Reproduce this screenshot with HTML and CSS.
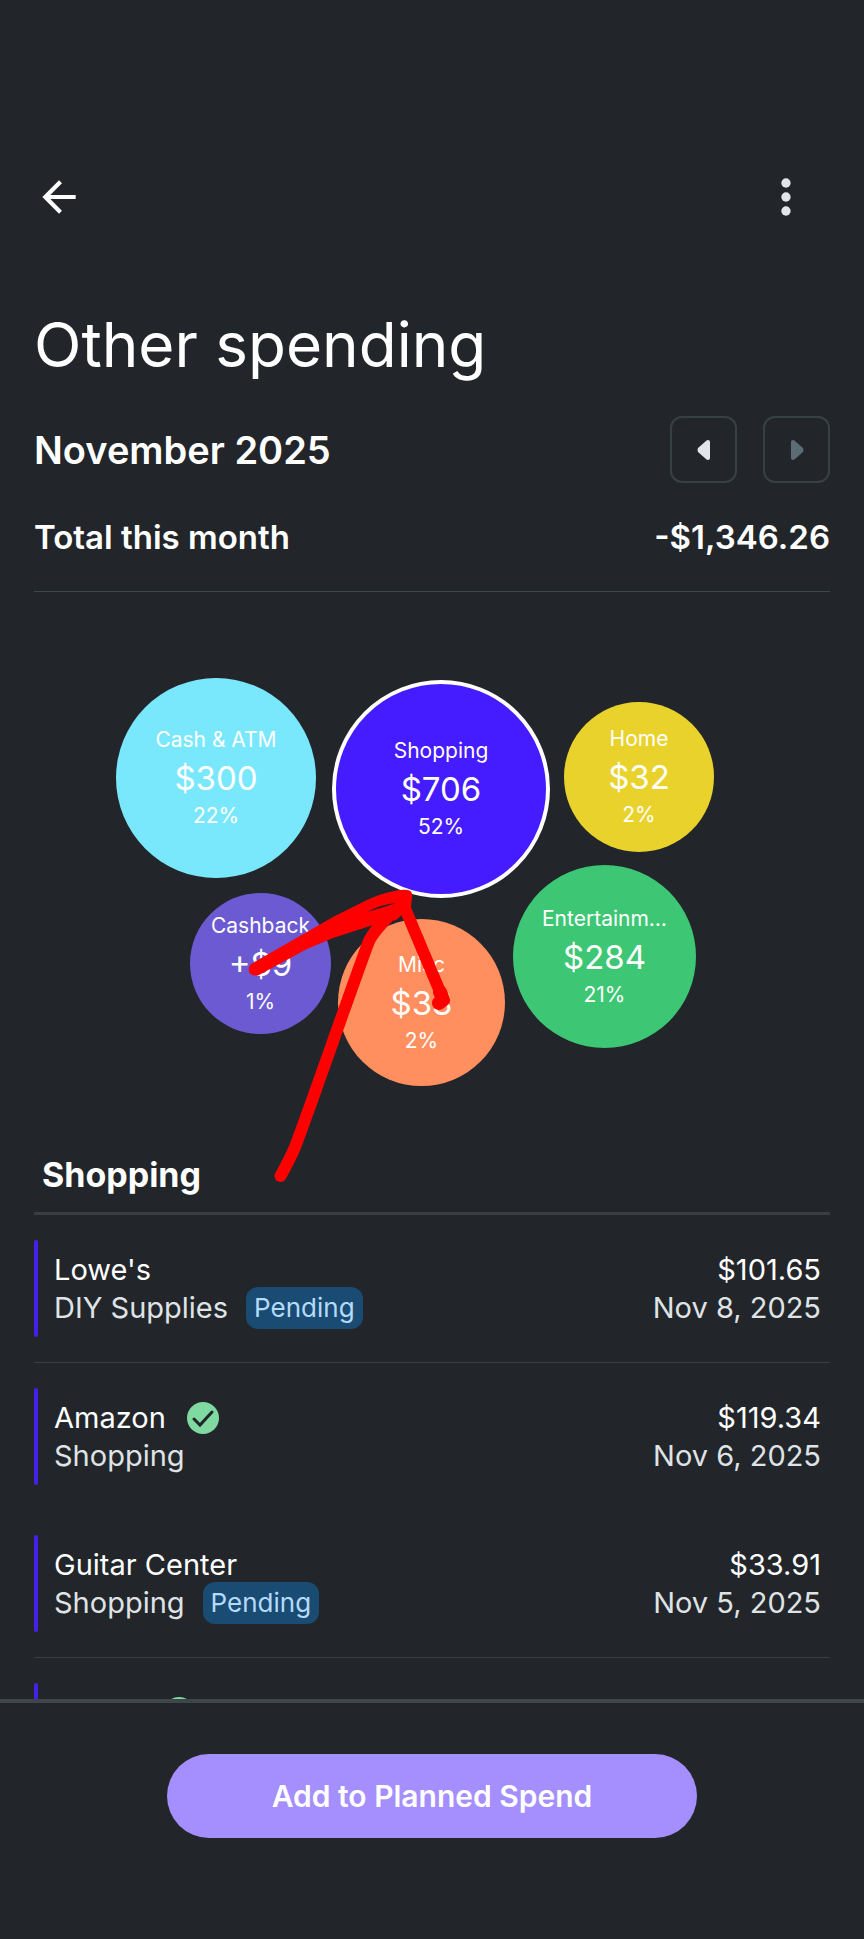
FILE: index.html
```
<!DOCTYPE html>
<html lang="en">
<head>
    <meta charset="UTF-8">
    <meta name="viewport" content="width=device-width, initial-scale=1.0">
    <title>Other spending</title>
    <link rel="stylesheet" href="styles.css">
</head>
<body>

    <main class="content">
        <!-- Top Bar -->
        <header class="top-bar">
            <button type="button" class="icon-button" aria-label="Back">
                <svg width="50" height="50" viewBox="0 0 24 24"><path fill="#fff" d="M20 11H7.83l5.59-5.59L12 4l-8 8 8 8 1.41-1.41L7.83 13H20v-2z"/></svg>
            </button>
            <button type="button" class="icon-button" aria-label="More options">
                <svg width="56" height="56" viewBox="0 0 24 24" fill="#e3e6e8"><circle cx="12" cy="6" r="2"/><circle cx="12" cy="12" r="2"/><circle cx="12" cy="18" r="2"/></svg>
            </button>
        </header>

        <h1>Other spending</h1>

        <!-- Month Picker -->
        <div class="month-row">
            <h2>November 2025</h2>
            <div class="month-nav">
                <button type="button" aria-label="Previous month">
                    <svg width="14" height="20" viewBox="0 0 14 20"><path fill="#e3e6e8" d="M13 2v16q0 2-2 2-1 0-2-1L1 12q-1-2 0-4L9 1q1-1 2-1 2 0 2 2z"/></svg>
                </button>
                <button type="button" aria-label="Next month" disabled>
                    <svg width="14" height="20" viewBox="0 0 14 20"><path fill="#5b6c74" d="M1 2v16q0 2 2 2 1 0 2-1l8-7q1-2 0-4L5 1Q4 0 3 0 1 0 1 2z"/></svg>
                </button>
            </div>
        </div>

        <div class="total-row">
            <span>Total this month</span>
            <span>-$1,346.26</span>
        </div>

        <!-- Category Bubbles -->
        <div class="bubbles">
            <button type="button" class="bubble cash">
                <span class="label">Cash &amp; ATM</span>
                <span class="amount">$300</span>
                <span class="percent">22%</span>
            </button>
            <button type="button" class="bubble shopping">
                <span class="label">Shopping</span>
                <span class="amount">$706</span>
                <span class="percent">52%</span>
            </button>
            <button type="button" class="bubble home">
                <span class="label">Home</span>
                <span class="amount">$32</span>
                <span class="percent">2%</span>
            </button>
            <button type="button" class="bubble cashback">
                <span class="label">Cashback</span>
                <span class="amount">+$9</span>
                <span class="percent">1%</span>
            </button>
            <button type="button" class="bubble misc">
                <span class="label">Misc</span>
                <span class="amount">$33</span>
                <span class="percent">2%</span>
            </button>
            <button type="button" class="bubble entertainment">
                <span class="label">Entertainm…</span>
                <span class="amount">$284</span>
                <span class="percent">21%</span>
            </button>

            <!-- Hand-drawn arrow -->
            <svg class="arrow" width="210" height="310" viewBox="128 208 210 310" aria-hidden="true">
                <g fill="none" stroke="#ff0000" stroke-width="12" stroke-linecap="round" stroke-linejoin="round">
                    <path d="M164.500 498C170 488 175 479 179 469C189 444 240 297 253 263C258 253 266 245 276 235L289 225"/>
                    <path d="M288 228L325 316"/>
                    <path stroke-width="14" d="M324 314L327 322L323 325"/>
                </g>
                <path fill="#ff0000" fill-rule="evenodd" d="M135 286L177 262L217 239L251 222Q264 216 274 214Q284 211 292 212Q297 213 296 219L295 229Q291 233 280 242L254 248L217 260L191 271L143 297Q136 299 133 294Q132 289 135 286zM251 234Q265 230 281 225Q265 226 251 234z"/>
            </svg>
        </div>

        <!-- Transactions -->
        <h3>Shopping</h3>
        <ul class="transactions">
            <li>
                <div class="details">
                    <div class="name">Lowe's</div>
                    <div class="category">DIY Supplies <span class="pending">Pending</span></div>
                </div>
                <div class="figures">
                    <div class="price">$101.65</div>
                    <div class="date">Nov 8, 2025</div>
                </div>
            </li>
            <li class="no-divider">
                <div class="details">
                    <div class="name">Amazon <svg class="check" width="32" height="32" viewBox="0 0 32 32"><circle cx="16" cy="16" r="16" fill="#7fd9a0"/><path d="M7 17l6 6L25 10" fill="none" stroke="#22262a" stroke-width="3" stroke-linecap="round"/></svg></div>
                    <div class="category">Shopping</div>
                </div>
                <div class="figures">
                    <div class="price">$119.34</div>
                    <div class="date">Nov 6, 2025</div>
                </div>
            </li>
            <li>
                <div class="details">
                    <div class="name">Guitar Center</div>
                    <div class="category">Shopping <span class="pending">Pending</span></div>
                </div>
                <div class="figures">
                    <div class="price">$33.91</div>
                    <div class="date">Nov 5, 2025</div>
                </div>
            </li>
            <li>
                <div class="details">
                    <div class="name">Target <svg class="check" width="32" height="32" viewBox="0 0 32 32"><circle cx="16" cy="16" r="16" fill="#7fd9a0"/><path d="M7 17l6 6L25 10" fill="none" stroke="#22262a" stroke-width="3" stroke-linecap="round"/></svg></div>
                </div>
                <div class="figures">
                    <div class="price">$21.14</div>
                </div>
            </li>
        </ul>
    </main>

    <footer>
        <button type="button" class="add-button">Add to Planned Spend</button>
    </footer>

</body>
</html>
```
FILE: styles.css
```
* {
    box-sizing: border-box;
}

body {
    margin: 0;
    height: 100vh;
    display: flex;
    flex-direction: column;
    background-color: #22262a;
    color: #fff;
    font-family: Inter, Roboto, sans-serif;
}

button {
    padding: 0;
    border: none;
    background: none;
    color: inherit;
    font-family: inherit;
    cursor: pointer;
}

svg {
    display: block;
}

h1, h2, h3 {
    margin: 0;
}

.content {
    flex: 1;
    min-height: 0;
    padding: 169px 34px 0;
    overflow-y: auto;
    scrollbar-width: none;
}

.top-bar {
    display: flex;
    justify-content: space-between;
    align-items: center;
    padding-right: 16px;
    margin-bottom: 80px;
}

h1 {
    font-size: 62px;
    font-weight: 400;
    line-height: 80px;
}

.month-row {
    display: flex;
    justify-content: space-between;
    align-items: center;
    margin-top: 31px;
}

h2 {
    font-size: 38px;
    font-weight: 600;
}

.month-nav {
    display: flex;
    gap: 26px;
}

.month-nav button {
    display: flex;
    justify-content: center;
    align-items: center;
    width: 67px;
    height: 67px;
    border: 2px solid #394043;
    border-radius: 12px;
}

.total-row {
    display: flex;
    justify-content: space-between;
    margin-top: 34px;
    padding-bottom: 34px;
    border-bottom: 1px solid #3f4649;
    font-size: 33px;
    font-weight: 600;
    line-height: 40px;
}

/* Bubbles */
.bubbles {
    position: relative;
    width: 632px;
    height: 408px;
    margin: 86px auto 69px;
}

.bubble {
    position: absolute;
    display: flex;
    flex-direction: column;
    justify-content: center;
    align-items: center;
    border-radius: 50%;
    font-size: 21px;
    line-height: 32px;
    white-space: nowrap;
}

.bubble .amount {
    font-size: 33px;
    line-height: 44px;
}

.cash {
    left: 0;
    top: 0;
    width: 200px;
    height: 200px;
    background-color: #7ae8fc;
}

.shopping {
    left: 216px;
    top: 2px;
    width: 218px;
    height: 218px;
    border: 4px solid #fff;
    background-color: #451cff;
}

.home {
    left: 448px;
    top: 24px;
    width: 150px;
    height: 150px;
    background-color: #e9d22c;
}

.cashback {
    left: 74px;
    top: 215px;
    width: 141px;
    height: 141px;
    background-color: #6c5ad2;
}

.misc {
    left: 222px;
    top: 241px;
    width: 167px;
    height: 167px;
    background-color: #ff8f5e;
}

.entertainment {
    left: 397px;
    top: 187px;
    width: 183px;
    height: 183px;
    background-color: #3dc674;
}

.arrow {
    position: absolute;
    left: 128px;
    top: 208px;
    pointer-events: none;
}

/* Transactions */
h3 {
    padding: 0 8px 17px;
    border-bottom: 3px solid #3a3e43;
    font-size: 34px;
    font-weight: 700;
    line-height: 40px;
}

.transactions {
    margin: 0;
    padding: 0;
    list-style: none;
    font-size: 29px;
    line-height: 38px;
}

.transactions li {
    display: flex;
    padding: 25px 0;
    border-bottom: 1px solid #3a3f43;
}

.transactions li.no-divider {
    border-bottom: none;
}

.transactions li::before {
    content: "";
    width: 4px;
    height: 97px;
    border-radius: 2px;
    background-color: #4520ea;
}

.details, .figures {
    display: flex;
    flex-direction: column;
    padding-top: 11px;
}

.details {
    flex: 1;
    padding-left: 16px;
}

.figures {
    padding-right: 9px;
    text-align: right;
}

.name, .category {
    display: flex;
    align-items: center;
    height: 38px;
}

.category, .date {
    color: #dfe3e6;
}

.check {
    margin-left: 21px;
}

.pending {
    margin-left: 18px;
    padding: 0 8px;
    border-radius: 12px;
    background-color: #1a4b73;
    color: #b5dbfb;
    font-size: 26px;
    line-height: 42px;
}

/* Bottom Bar */
footer {
    padding: 51px 34px 101px;
    border-top: 4px solid #3e4649;
    text-align: center;
}

.add-button {
    width: 530px;
    max-width: 100%;
    height: 84px;
    border-radius: 42px;
    background-color: #a58fff;
    font-size: 30px;
    font-weight: 600;
}
```
